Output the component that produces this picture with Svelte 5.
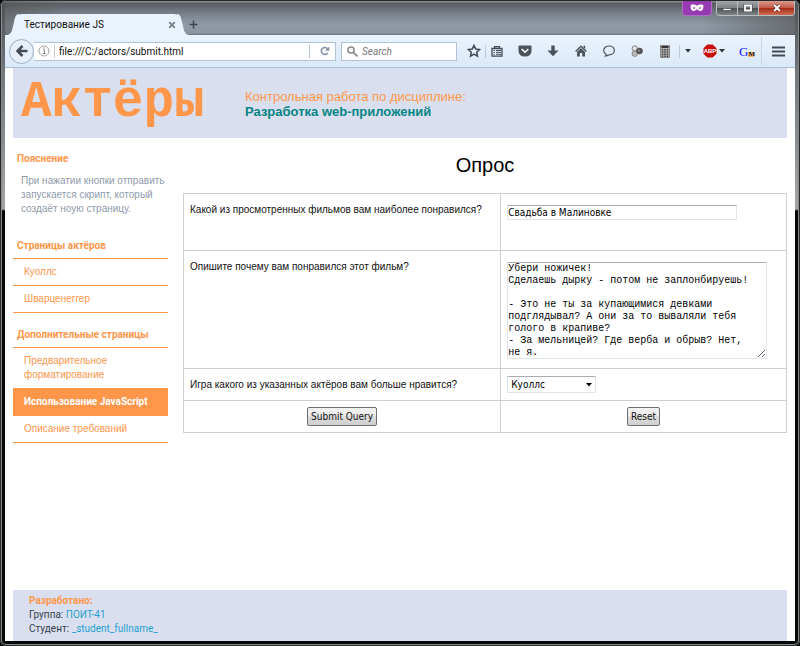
<script>
  const starPages = ['Куоллс', 'Шварценеггер'];
  const extraPages = [
    { title: 'Предварительное форматирование', active: false },
    { title: 'Использование JavaScript', active: true },
    { title: 'Описание требований', active: false }
  ];

  let address = $state('file:///C:/actors/submit.html');
  let query = $state('');
  let film = $state('Свадьба в Малиновке');
  let actor = $state('Куоллс');
  let opinion = $state(
    'Убери ножичек!\nСделаешь дырку - потом не заплонбируешь!\n\n- Это не ты за купающимися девками подглядывал? А они за то вываляли тебя голого в крапиве?\n- За мельницей? Где верба и обрыв? Нет, не я.'
  );
</script>

<div class="window">
  <div class="titlebar">
    <div class="tab">
      <span class="tab-title">Тестирование JS</span>
      <button class="plain" aria-label="Close tab">
        <svg width="8" height="8" viewBox="0 0 8 8"><path d="M1.2 1.2l5.6 5.6M6.8 1.2L1.2 6.8" stroke="#7c8389" stroke-width="1.9" /></svg>
      </button>
    </div>
    <button class="plain new-tab" aria-label="New tab">
      <svg width="9" height="9" viewBox="0 0 9 9"><path d="M4.5 .5v8M.5 4.5h8" stroke="#3f464c" stroke-width="1.5" /></svg>
    </button>
    <div class="spacer"></div>
    <div class="private">
      <svg width="14" height="8" viewBox="0 0 14 8"><path fill="#fff" fill-rule="evenodd" d="M.8 1C3 .3 5 .5 7 1.7 9 .5 11 .3 13.200 1c.6 3.500-.6 6-3 6C8.800 7 8 5.800 7 5.200 6 5.800 5.200 7 3.800 7 1.400 7 .2 4.500.8 1zM2.600 3.700c.7 1.200 2.100 1.300 3 .3-.8-1-2-1.200-3-.3zM11.400 3.700c-1-.9-2.200-.7-3 .3.9 1 2.300.9 3-.3z" /></svg>
    </div>
    <div class="controls">
      <button aria-label="Minimize"><svg width="10" height="8" viewBox="0 0 10 8"><path d="M1 4.500h8v2H1z" fill="#fff" stroke="#444" stroke-width=".6" /></svg></button>
      <button aria-label="Maximize"><svg width="10" height="8" viewBox="0 0 10 8"><path d="M2 1.500h6v5H2z" fill="none" stroke="#444" stroke-width="3" /><path d="M2 1.500h6v5H2z" fill="none" stroke="#fff" stroke-width="1.800" /></svg></button>
      <button class="close" aria-label="Close"><svg width="10" height="8" viewBox="0 0 10 8"><path d="M2.200 1l5.600 6M7.800 1L2.200 7" stroke="#5d1a14" stroke-width="3.200" /><path d="M2.200 1l5.600 6M7.800 1L2.200 7" stroke="#fff" stroke-width="2" /></svg></button>
    </div>
  </div>

  <div class="toolbar">
    <button class="back" aria-label="Back">
      <svg width="12" height="12" viewBox="0 0 12 12"><path d="M6.500 1L1.500 6l5 5M2 6h9.500" fill="none" stroke="#434a52" stroke-width="2.500" /></svg>
    </button>
    <div class="urlbar">
      <svg width="12" height="12" viewBox="0 0 12 12"><circle cx="6" cy="6" r="5" fill="none" stroke="#a0a0a0" /><path d="M5 5h1.500v3.500M4.600 8.500h3" fill="none" stroke="#888" /><path d="M5.400 2.500h1.200v1.200H5.400z" fill="#888" /></svg>
      <input type="text" aria-label="Address" bind:value={address} />
      <button class="plain reload" aria-label="Reload">
        <svg width="10" height="10" viewBox="0 0 10 10"><path d="M7.800 6.800A3.500 3.500 0 1 1 7.500 2.700" fill="none" stroke="#8293a5" stroke-width="1.600" /><path d="M9.300.5v4.300H5z" fill="#8293a5" /></svg>
      </button>
    </div>
    <div class="search">
      <svg width="11" height="11" viewBox="0 0 11 11"><circle cx="4" cy="4" r="3.100" fill="none" stroke="#888" stroke-width="1.500" /><path d="M6.400 6.400l4 4" stroke="#888" stroke-width="1.800" /></svg>
      <input type="text" aria-label="Search" placeholder="Search" bind:value={query} />
    </div>
    <div class="tools">
      <button class="plain star" aria-label="Bookmark">
        <svg width="14" height="14" viewBox="0 0 14 14"><path d="M7 1.300l1.700 3.700 4 .5-3 2.700.8 4L7 10.200l-3.500 2 .8-4-3-2.700 4-.5z" fill="none" stroke="#434a52" stroke-width="1.500" /></svg>
      </button>
      <button class="plain list" aria-label="Bookmarks list">
        <svg width="12" height="12" viewBox="0 0 12 12"><path d="M1 3.500h10v7.700H1zM3.500 3.500V1.700h5v1.800" fill="none" stroke="#434a52" stroke-width="1.300" /><path d="M2.500 5.500h1.300M5 5.500h5M2.500 7.400h1.300M5 7.400h5M2.500 9.300h1.300M5 9.300h5" stroke="#434a52" /></svg>
      </button>
      <button class="plain tool" aria-label="Pocket">
        <svg width="14" height="12" viewBox="0 0 14 12"><path d="M1.500.5h11q1 0 1 1v4q0 6-6.500 6T.5 5.500v-4q0-1 1-1z" fill="#4b535b" /><path d="M3.700 4L7 7.200 10.300 4" fill="none" stroke="#fff" stroke-width="1.600" /></svg>
      </button>
      <button class="plain tool" aria-label="Downloads">
        <svg width="12" height="12" viewBox="0 0 12 12"><path d="M4.300.5h3.400v5H11.500L6 11.300.5 5.500h3.800z" fill="#4b535b" /></svg>
      </button>
      <button class="plain tool" aria-label="Home">
        <svg width="12" height="12" viewBox="0 0 12 12"><path d="M.6 6.500L6 1.300l5.400 5.200" fill="none" stroke="#4b535b" stroke-width="1.400" /><path d="M8.500.8h1.700V4L8.500 2.500zM2 7l4-3.900L10 7v4.500H7.200V8H4.800v3.500H2z" fill="#4b535b" /></svg>
      </button>
      <button class="plain tool" aria-label="Chat">
        <svg width="12" height="12" viewBox="0 0 12 12"><path d="M3.300 9.200C1.700 8.400.7 7 .7 5.400.7 2.900 3 1 6 1s5.300 1.900 5.300 4.400S9 9.800 6 9.800c-.7 0-1.600 1.100-3.500 1.200.6-.6.8-1.100.8-1.800z" fill="none" stroke="#4b535b" stroke-width="1.200" /></svg>
      </button>
      <button class="plain tool" aria-label="Connections">
        <svg width="12" height="12" viewBox="0 0 12 12"><circle cx="3.800" cy="3.500" r="2.700" fill="#e1e1e1" stroke="#858585" /><circle cx="3.800" cy="8.700" r="2.700" fill="#bcbcbc" stroke="#858585" /><circle cx="8.500" cy="6" r="2.900" fill="#4e4e4e" stroke="#5d5d5d" /><circle cx="8" cy="5.800" r="1.200" fill="#888" /></svg>
      </button>
      <button class="plain tool" aria-label="Calculator">
        <svg width="10" height="13" viewBox="0 0 10 13"><path d="M.5.500h9v12h-9z" fill="#b2b2b2" stroke="#888" /><path d="M1.500 1h7v2h-7z" fill="#333" /><path d="M2.500 4v8M5 4v8M7.500 4v8" stroke="#444" stroke-width="1.500" stroke-dasharray="1.500 .7" /></svg>
      </button>
      <button class="plain caret" aria-label="More">
        <svg width="6" height="4" viewBox="0 0 6 4"><path d="M0 0h6L3 3.500z" fill="#2e3338" /></svg>
      </button>
      <button class="plain abp" aria-label="Adblock Plus">
        <svg width="14" height="14" viewBox="0 0 14 14"><path d="M4.300.5h5.400l3.800 3.800v5.400l-3.800 3.800H4.300L.5 9.700V4.300z" fill="#cc0b0b" /><text x="7" y="9.300" text-anchor="middle" font-size="6" font-weight="700" font-family="Liberation Sans, sans-serif" fill="#fff">ABP</text></svg>
        <svg width="6" height="4" viewBox="0 0 6 4"><path d="M0 0h6L3 3.500z" fill="#2e3338" /></svg>
      </button>
      <button class="plain tool" aria-label="GM">
        <svg width="16" height="14" viewBox="0 0 16 14"><path d="M9 8h6v5H9z" fill="#f4b76a" /><text x="0" y="12" font-size="13" font-family="Liberation Serif, serif" fill="#1414ff">G</text><text x="9.500" y="12" font-size="7" font-weight="700" font-family="Liberation Serif, serif" fill="#111">M</text></svg>
      </button>
      <button class="plain menu" aria-label="Menu">
        <svg width="13" height="11" viewBox="0 0 13 11"><path d="M.5 1.500h12M.5 5.500h12M.5 9.500h12" stroke="#434a52" stroke-width="2" stroke-linecap="round" /></svg>
      </button>
    </div>
  </div>

  <div class="page">
    <header>
      <div class="logo">Актёры</div>
      <div class="course">
        <div>Контрольная работа по дисциплине:</div>
        <strong>Разработка web-приложений</strong>
      </div>
    </header>

    <div class="body">
      <aside>
        <h2>Пояснение</h2>
        <p>При нажатии кнопки отправить запускается скрипт, который создаёт ноую страницу.</p>
        <h2>Страницы актёров</h2>
        <ul>
          {#each starPages as page}
            <li><a href="#top">{page}</a></li>
          {/each}
        </ul>
        <h2>Дополнительные страницы</h2>
        <ul>
          {#each extraPages as page}
            <li><a href="#top" class:active={page.active}>{page.title}</a></li>
          {/each}
        </ul>
      </aside>

      <main>
        <h1>Опрос</h1>
        <form onsubmit={(e) => e.preventDefault()}>
          <table>
            <tbody>
              <tr class="film">
                <td><label for="film">Какой из просмотренных фильмов вам наиболее понравился?</label></td>
                <td class="field"><input id="film" type="text" bind:value={film} /></td>
              </tr>
              <tr class="opinion">
                <td><label for="opinion">Опишите почему вам понравился этот фильм?</label></td>
                <td class="field"><textarea id="opinion" spellcheck="false" bind:value={opinion}></textarea></td>
              </tr>
              <tr>
                <td><label for="actor">Игра какого из указанных актёров вам больше нравится?</label></td>
                <td class="choice">
                  <div class="select">
                    <select id="actor" bind:value={actor}>
                      {#each starPages as name}
                        <option>{name}</option>
                      {/each}
                    </select>
                    <svg width="6" height="4" viewBox="0 0 6 4"><path d="M0 0h6L3 3.500z" fill="#000" /></svg>
                  </div>
                </td>
              </tr>
              <tr class="actions">
                <td><button type="submit">Submit Query</button></td>
                <td><button type="reset">Reset</button></td>
              </tr>
            </tbody>
          </table>
        </form>
      </main>
    </div>

    <footer>
      <div class="made">Разработано:</div>
      <div>Группа: <span>ПОИТ-41</span></div>
      <div>Студент: <span>_student_fullname_</span></div>
    </footer>
  </div>
</div>

<style>
  :global(body) {
    background: #000;
  }
  .window {
    box-sizing: border-box;
    min-height: 100vh;
    display: flex;
    flex-direction: column;
    padding: 1px 5px 5px;
    border-radius: 6px;
    box-shadow: inset 0 0 0 1px #26282a, inset 0 0 0 2px #85898c;
    background: linear-gradient(#4d5053, #6f767c 70px, #a5a5a5 209px, #060707 211px);
    font-family: 'Liberation Sans', Arial, sans-serif;
  }
  .plain {
    display: flex;
    align-items: center;
    justify-content: center;
    padding: 0;
    border: 0;
    background: none;
  }
  .titlebar {
    display: flex;
    height: 34px;
    align-items: flex-start;
    background: linear-gradient(90deg, #5558, #5550 60px, #5550 88%, #555a), linear-gradient(#85888b 1px, #585c61 2px, #7c858e 14px, #8f9ba7 24px, #8b96a1 32px, #65707a);
  }
  .tab {
    display: flex;
    box-sizing: border-box;
    width: 166px;
    height: 21px;
    margin: 13px 0 0 10px;
    padding: 0 5px 0 9px;
    align-items: center;
    justify-content: space-between;
    border-radius: 7px 7px 0 0;
    background: #eaf3fd;
    position: relative;
  }
  .tab::before,
  .tab::after {
    content: '';
    position: absolute;
    bottom: 0;
    width: 12px;
    height: 21px;
    background: #eaf3fd;
  }
  .tab::before {
    left: -8px;
    clip-path: path('M0 21C5 20 5 16 7 8C8 3 9 0 12 0V21Z');
  }
  .tab::after {
    right: -8px;
    clip-path: path('M12 21C7 20 7 16 5 8C4 3 3 0 0 0V21Z');
  }
  .tab-title {
    font: 10px/14px 'DejaVu Sans Condensed', 'DejaVu Sans', sans-serif;
    font-family: Roboto, sans-serif;
    color: #111;
  }
  .new-tab {
    margin: 19px 0 0 8px;
  }
  .spacer {
    flex: 1;
  }
  .private {
    display: flex;
    width: 28px;
    height: 14px;
    margin-right: 4px;
    align-items: center;
    justify-content: center;
    border: 1px solid #b06cc4;
    border-top: 0;
    border-radius: 0 0 4px 4px;
    box-sizing: content-box;
    background: #963ab2;
  }
  .controls {
    display: flex;
    height: 14px;
    border: 1px solid #b9bec2;
    border-top: 0;
    border-radius: 0 0 4px 4px;
    overflow: hidden;
  }
  .controls button {
    width: 21px;
    padding: 0;
    border: 0;
    border-right: 1px solid #b9bec2;
    display: flex;
    align-items: center;
    justify-content: center;
    background: linear-gradient(#a3a6a8, #7d8082 50%, #4c4f51 50%, #808386);
  }
  .controls .close {
    width: 35px;
    border-right: 0;
    background: linear-gradient(#d99a8c, #c35846 50%, #a32a17 50%, #cf6b50);
  }
  .toolbar {
    display: flex;
    height: 33px;
    align-items: center;
    box-sizing: border-box;
    padding-left: 4px;
    border-bottom: 1px solid #a9c1da;
    background: linear-gradient(#eaf3fd, #dae9f8);
  }
  .back {
    display: flex;
    width: 25px;
    height: 25px;
    padding: 0;
    align-items: center;
    justify-content: center;
    border: 1px solid #9fb0c8;
    border-radius: 50%;
    background: #e6effa;
    position: relative;
  }
  .urlbar,
  .search {
    display: flex;
    box-sizing: border-box;
    height: 19px;
    align-items: center;
    border: 1px solid #b0c3d8;
    background: #fff;
  }
  .urlbar {
    flex: 1;
    min-width: 0;
    margin-right: 5px;
    padding-left: 4px;
    border-left: 0;
    gap: 4px;
  }
  .urlbar input,
  .search input {
    flex: 1;
    min-width: 0;
    height: 13px;
    padding: 0 0 0 4px;
    border: 0;
    outline: 0;
    background: none;
    font: 10px/13px Roboto, sans-serif;
    color: #111;
  }
  .urlbar input {
    border-left: 1px solid #c4cbd2;
    border-right: 1px solid #b6c3d2;
  }
  .reload {
    width: 21px;
  }
  .search {
    width: 116px;
    padding-left: 5px;
  }
  .search input::placeholder {
    color: #777;
    font-style: italic;
  }
  .tools {
    display: flex;
    align-items: center;
    margin-left: 5px;
  }
  .star {
    width: 24px;
    height: 13px;
    border-right: 1px solid #bccbdc;
  }
  .list {
    width: 22px;
    margin-right: 3px;
  }
  .tool {
    width: 28px;
  }
  .caret {
    width: 16px;
    height: 13px;
    border-left: 1px solid #bccbdc;
  }
  .abp {
    width: 38px;
    gap: 2px;
  }
  .menu {
    width: 34px;
    height: 28px;
    border-left: 1px solid #c8d5e4;
  }
  .page {
    flex: 1;
    display: flex;
    flex-direction: column;
    padding: 0 8px;
    background: #fff;
  }
  header {
    display: flex;
    height: 70px;
    align-items: center;
    background: #d9dfee;
  }
  .logo {
    width: 232px;
    box-sizing: border-box;
    padding-left: 8px;
    font: bold 51px/60px 'Liberation Mono', monospace;
    color: #ff964a;
  }
  .course {
    padding-top: 2px;
    font-size: 13px;
    line-height: 15px;
    color: #ff964a;
  }
  .course strong {
    color: #058585;
  }
  .body {
    flex: 1;
    display: flex;
    gap: 15px;
  }
  aside {
    width: 155px;
    flex: none;
    padding-top: 14px;
    font-size: 10px;
    line-height: 14px;
  }
  h2 {
    margin: 0;
    padding: 0 4px 5px;
    font: bold 10px/14px Roboto, sans-serif;
    color: #ff964a;
  }
  aside p {
    margin: 3px 0 23px 8px;
    color: #8f9bab;
  }
  ul {
    margin: 0 0 15px;
    padding: 0;
    list-style: none;
    border-top: 1px solid #ff964a;
  }
  li a {
    display: block;
    padding: 6px 11px;
    border-bottom: 1px solid #ff964a;
    color: #ff964a;
    text-decoration: none;
  }
  li a.active {
    background: #ff964a;
    color: #fff;
    font-weight: bold;
    font-family: Roboto, sans-serif;
  }
  main {
    flex: 1;
    min-width: 0;
  }
  h1 {
    margin: 0;
    padding: 14px 0 15px;
    font-size: 20px;
    line-height: 26px;
    font-weight: normal;
    text-align: center;
  }
  table {
    width: 100%;
    table-layout: fixed;
    border-collapse: collapse;
    font-size: 10px;
    line-height: 14px;
    color: #111;
  }
  td {
    box-sizing: border-box;
    height: 32px;
    padding: 9px 6px 0;
    border: 1px solid #cfcfcf;
    vertical-align: top;
  }
  td:first-child {
    width: 52.6%;
  }
  .film td {
    height: 57px;
  }
  .opinion td {
    height: 118px;
  }
  td.field {
    padding-top: 11px;
  }
  td.choice {
    padding-top: 7px;
  }
  td input,
  textarea,
  select {
    display: block;
    box-sizing: border-box;
    border: 1px solid #dfe5ec;
    border-top-color: #abadb3;
    background: #fff;
    color: #000;
    outline: 0;
  }
  td input {
    width: 230px;
    max-width: 100%;
    height: 15px;
    padding: 0;
    font: 10px/13px 'DejaVu Sans Condensed', 'DejaVu Sans', sans-serif;
  }
  textarea {
    width: 260px;
    max-width: 100%;
    height: 97px;
    padding: 0 12px 0 0;
    overflow: hidden;
    font: 10px/12px 'Liberation Mono', monospace;
  }
  .select {
    position: relative;
    width: 89px;
  }
  select {
    width: 100%;
    height: 17px;
    padding: 0 3px;
    appearance: none;
    font: 10px/15px 'DejaVu Sans Condensed', 'DejaVu Sans', sans-serif;
  }
  .select svg {
    position: absolute;
    right: 4px;
    top: 7px;
    pointer-events: none;
  }
  .actions td {
    padding: 6px;
    text-align: center;
  }
  .actions button {
    height: 19px;
    padding: 0 3px;
    border: 1px solid #707070;
    border-radius: 2px;
    background: linear-gradient(#f2f2f2, #ebebeb 50%, #dddddd 50%, #cfcfcf);
    font: 10px/14px 'DejaVu Sans Condensed', 'DejaVu Sans', sans-serif;
    color: #111;
    vertical-align: top;
  }
  footer {
    padding: 4px 16px 5px;
    background: #d9dfee;
    font: 10px/14px Roboto, 'Liberation Sans', sans-serif;
    color: #333f50;
  }
  footer span {
    color: #1f9fd0;
  }
  footer .made {
    font-weight: bold;
    color: #ff964a;
  }
</style>
